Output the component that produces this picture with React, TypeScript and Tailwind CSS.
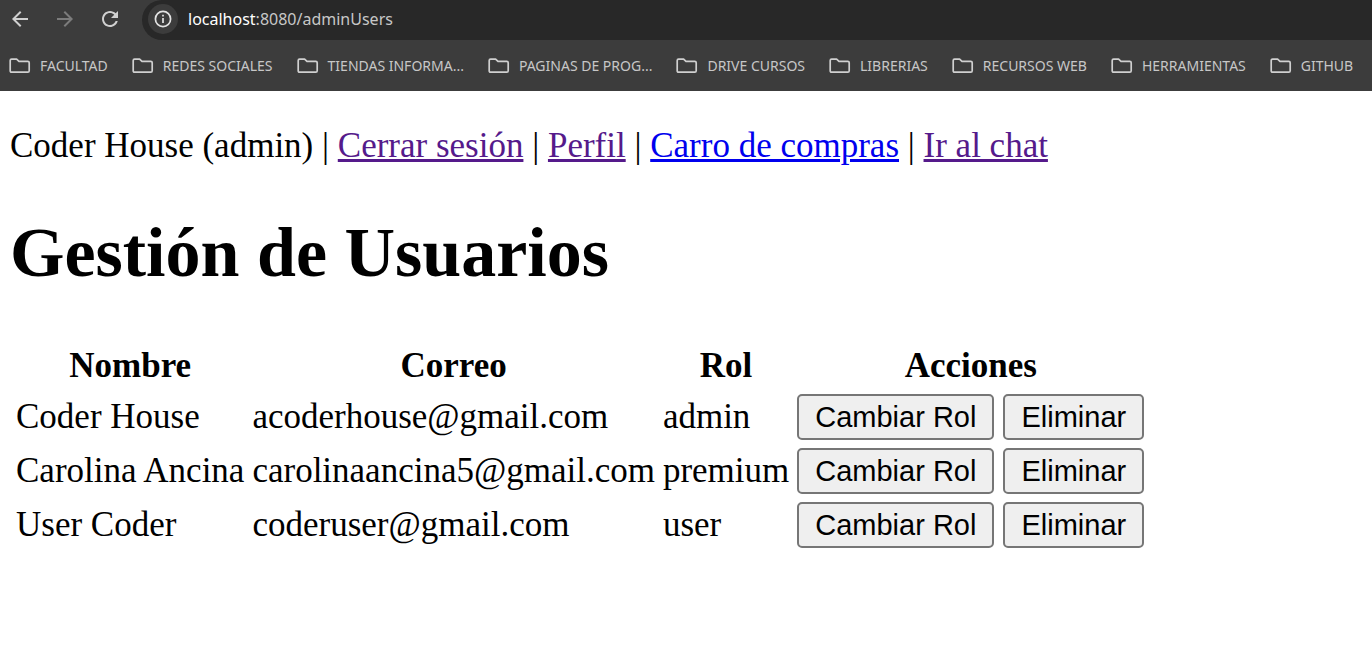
import React from "react";

const bookmarks: string[] = [
  "FACULTAD",
  "REDES SOCIALES",
  "TIENDAS INFORMA...",
  "PAGINAS DE PROG...",
  "DRIVE CURSOS",
  "LIBRERIAS",
  "RECURSOS WEB",
  "HERRAMIENTAS",
  "GITHUB",
];

type User = { name: string; email: string; role: string };

const users: User[] = [
  { name: "Coder House", email: "acoderhouse@gmail.com", role: "admin" },
  { name: "Carolina Ancina", email: "carolinaancina5@gmail.com", role: "premium" },
  { name: "User Coder", email: "coderuser@gmail.com", role: "user" },
];

function FolderIcon() {
  return (
    <svg className="h-4 w-[22px] shrink-0" viewBox="0 0 22 16" fill="none" stroke="#d0d0d0" strokeWidth="1.7" strokeLinejoin="round" aria-hidden="true">
      <path d="M2.6 1.1H7.6L10 3.4H18.8Q20.2 3.4 20.2 4.8V12.8Q20.2 14.2 18.8 14.2H2.6Q1.2 14.2 1.2 12.8V2.5Q1.2 1.1 2.6 1.1Z" />
    </svg>
  );
}

function ArrowIcon({ forward = false }: { forward?: boolean }) {
  return (
    <svg className="size-4" viewBox="4 4 16 16" fill={forward ? "#7c7c7c" : "#d0d0d0"} aria-hidden="true">
      {forward ? (
        <path d="M12 4l-1.41 1.41L16.17 11H4v2h12.17l-5.58 5.59L12 20l8-8z" />
      ) : (
        <path d="M20 11H7.83l5.59-5.59L12 4l-8 8 8 8 1.41-1.41L7.83 13H20v-2z" />
      )}
    </svg>
  );
}

function ReloadIcon() {
  return (
    <svg className="size-4" viewBox="4 4 16 16" fill="#d0d0d0" aria-hidden="true">
      <path d="M17.65 6.35C16.2 4.9 14.21 4 12 4c-4.42 0-7.99 3.58-7.99 8s3.57 8 7.99 8c3.73 0 6.84-2.55 7.73-6h-2.08c-.82 2.33-3.04 4-5.65 4-3.31 0-6-2.69-6-6s2.69-6 6-6c1.66 0 3.14.69 4.22 1.78L13 11h7V4l-2.35 2.35z" />
    </svg>
  );
}

function InfoIcon() {
  return (
    <svg className="size-[18px]" viewBox="0 0 18 18" fill="none" aria-hidden="true">
      <circle cx="9" cy="9" r="7.6" stroke="#e3e3e3" strokeWidth="1.7" />
      <path d="M9 8V13M9 4.8V6.6" stroke="#e3e3e3" strokeWidth="1.7" />
    </svg>
  );
}

function BrowserBar() {
  return (
    <header className="overflow-hidden bg-[#3c3c3c] font-['Noto_Sans','Open_Sans',sans-serif]">
      <div className="flex h-10 items-center pl-3">
        <div className="flex items-center gap-[29px] pr-6 pb-0.5">
          <button type="button" aria-label="Atrás"><ArrowIcon /></button>
          <button type="button" aria-label="Adelante" disabled><ArrowIcon forward /></button>
          <button type="button" aria-label="Recargar"><ReloadIcon /></button>
        </div>
        <div className="flex h-10 grow items-center gap-2.5 rounded-l-full bg-[#282828] pb-0.5 pl-1.5">
          <button type="button" aria-label="Información del sitio" className="flex size-[30px] shrink-0 items-center justify-center rounded-full bg-[#3c3c3c]">
            <InfoIcon />
          </button>
          <div className="text-base whitespace-nowrap text-[#c7c7c7]">
            <span className="text-white">localhost</span>:8080/adminUsers
          </div>
        </div>
      </div>
      <nav aria-label="Marcadores" className="flex h-[51px] items-center gap-6 pl-[9px]">
        {bookmarks.map((label) => (
          <a key={label} href="#" className="flex shrink-0 items-center gap-[9px] text-sm whitespace-nowrap text-[#c7c7c7]">
            <FolderIcon />
            {label}
          </a>
        ))}
      </nav>
    </header>
  );
}

function ActionButton({ children }: { children: React.ReactNode }) {
  return (
    <button type="button" className="h-[46px] rounded-[5px] border-2 border-[#767676] bg-[#efefef] px-4 font-['Liberation_Sans',Arial,sans-serif] text-[29px] leading-8">
      {children}
    </button>
  );
}

export default function App() {
  return (
    <div className="min-h-screen bg-white text-black">
      <BrowserBar />
      <main className="px-2.5 pt-[35px] font-['Liberation_Serif','Times_New_Roman',serif] text-[35px] leading-10">
        <p>
          Coder House (admin) |{" "}
          <a href="#" className="text-[#551a8b] underline">Cerrar sesión</a> |{" "}
          <a href="#" className="text-[#551a8b] underline">Perfil</a> |{" "}
          <a href="#" className="text-[#0000ee] underline">Carro de compras</a> |{" "}
          <a href="#" className="text-[#551a8b] underline">Ir al chat</a>
        </p>
        <h1 className="my-[47px] text-[70px] leading-[80px] font-bold">Gestión de Usuarios</h1>
        <table className="border-separate border-spacing-1 whitespace-nowrap">
          <thead>
            <tr>
              {["Nombre", "Correo", "Rol", "Acciones"].map((title) => (
                <th key={title} scope="col" className="p-0.5 text-center font-bold">{title}</th>
              ))}
            </tr>
          </thead>
          <tbody>
            {users.map((user) => (
              <tr key={user.email}>
                <td className="p-0.5">{user.name}</td>
                <td className="p-0.5">{user.email}</td>
                <td className="p-0.5">{user.role}</td>
                <td className="p-0.5">
                  <div className="flex gap-[9px]">
                    <ActionButton>Cambiar Rol</ActionButton>
                    <ActionButton>Eliminar</ActionButton>
                  </div>
                </td>
              </tr>
            ))}
          </tbody>
        </table>
      </main>
    </div>
  );
}
